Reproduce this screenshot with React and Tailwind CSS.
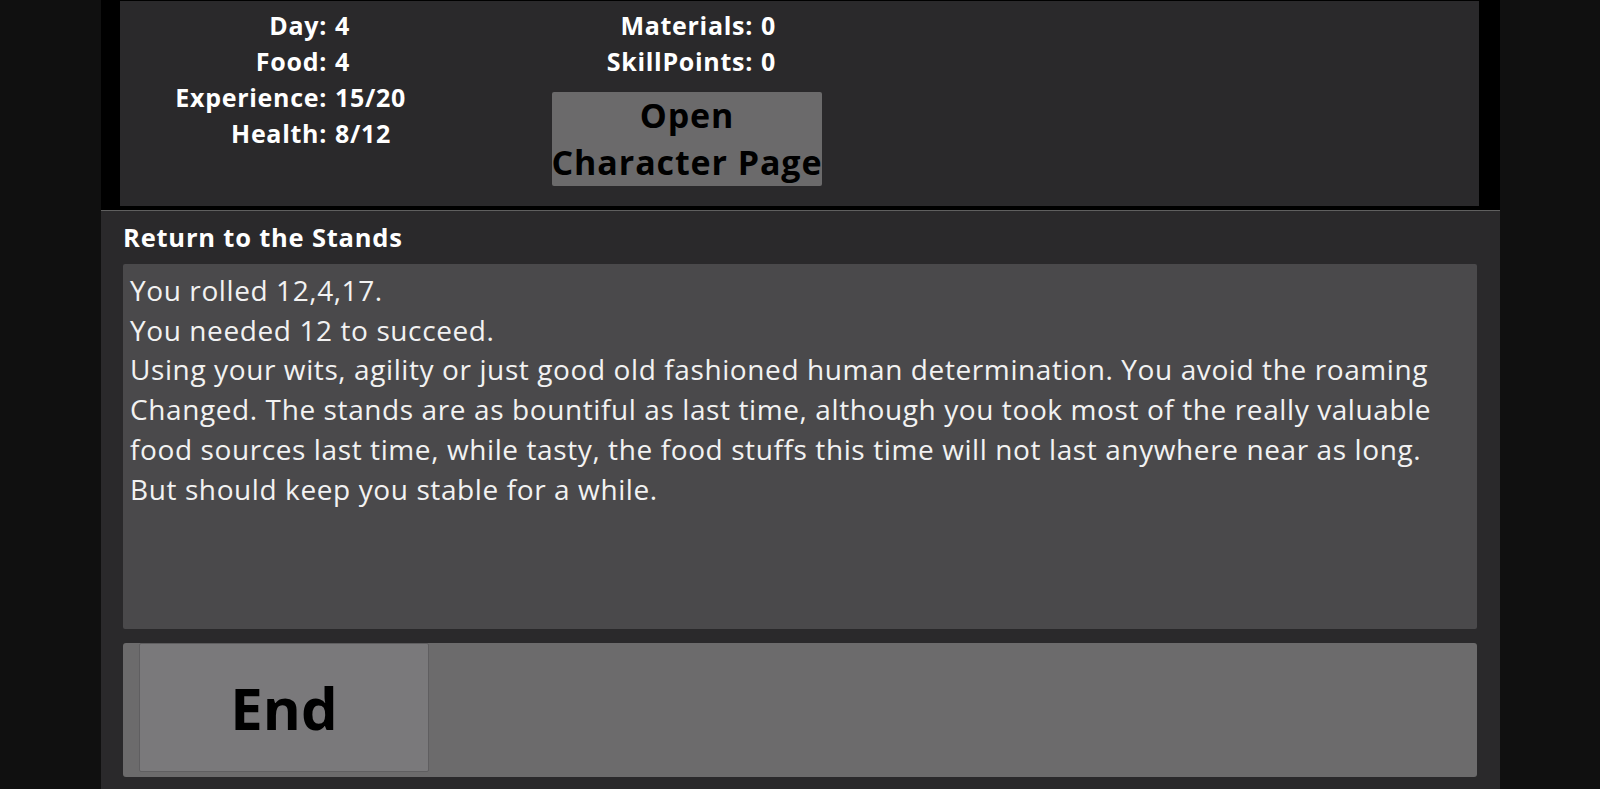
function StatRow({ label, value }) {
  return (
    <>
      <div className="text-right">{label}</div>
      <div>{value}</div>
    </>
  );
}

export default function App() {
  return (
    <div className="w-full h-[789px] bg-[#101010] overflow-hidden font-['Open_Sans',sans-serif]">
      <div className="ml-[101px] w-[1399px] h-full flex flex-col">
        {/* top stats bar */}
        <div className="bg-black h-[210px] pl-[19px] pr-[21px] pt-[1px] pb-[4px]">
          <div className="h-full bg-[#2a292b] flex text-white font-bold text-[25px] tracking-[0.7px] leading-[36px]">
            <div className="w-[432px] pt-[6px] grid grid-cols-[207px_1fr] gap-x-[8px] content-start">
              <StatRow label="Day: " value="4" />
              <StatRow label="Food:" value="4" />
              <StatRow label="Experience:" value="15/20" />
              <StatRow label="Health:" value="8/12" />
            </div>
            <div className="w-[270px] pt-[6px] flex flex-col">
              <div className="grid grid-cols-[201px_1fr] gap-x-[8px]">
                <StatRow label="Materials:" value="0" />
                <StatRow label="SkillPoints:" value="0" />
              </div>
              <button className="mt-[13px] h-[94px] w-[270px] bg-[#6b6a6b] rounded-[2px] text-black text-[34px] tracking-[0.9px] leading-[47px] whitespace-nowrap flex flex-col items-center justify-center">
                <span>Open</span>
                <span>Character Page</span>
              </button>
            </div>
          </div>
        </div>

        {/* event panel */}
        <div className="flex-1 bg-[#2a292b] border-t border-[#5f5f5f] pl-[22px] pr-[23px] pt-[10px] flex flex-col">
          <h2 className="text-white font-bold text-[25.5px] tracking-[0.8px] leading-[32px] mb-[11px]">Return to the Stands</h2>
          <div className="h-[365px] bg-[#4a494b] rounded-[2px] pl-[7px] pr-[14px] pt-[7px] text-[#f2f2f2] text-[28px] tracking-[0.6px] leading-[39.7px]">
            <p>You rolled 12,4,17.</p>
            <p>You needed 12 to succeed.</p>
            <p>
              Using your wits, agility or just good old fashioned human determination. You avoid the roaming Changed. The stands are as bountiful as last time, although you took most of the really valuable food sources last time, while tasty, the food stuffs this time will not last anywhere near as long. But should keep you stable for a while.
            </p>
          </div>
          <div className="mt-[14px] h-[134px] bg-[#6c6b6c] rounded-[3px] pl-[16px]">
            <button className="w-[290px] h-[129px] bg-[#7a797b] border border-[#5f5e60] rounded-[2px] text-black font-bold text-[58px] leading-none flex items-center justify-center">
              End
            </button>
          </div>
        </div>
      </div>
    </div>
  );
}
